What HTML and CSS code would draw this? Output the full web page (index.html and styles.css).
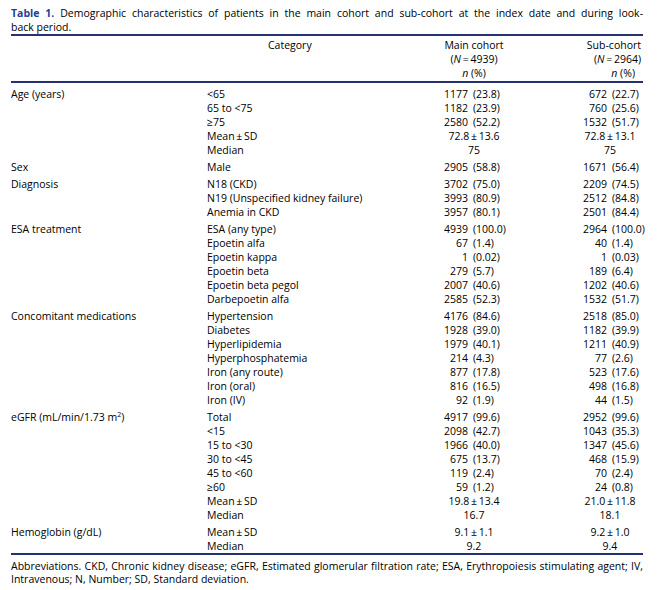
FILE: index.html
```html
<!DOCTYPE html>
<html lang="en">
<head>
<meta charset="utf-8">
<title>Table 1</title>
<link rel="stylesheet" href="styles.css">
</head>
<body>
<div class="page">
  <div class="caption">
    <span class="jline"><span class="label">Table 1.</span> Demographic characteristics of patients in the main cohort and sub-cohort at the index date and during look-</span>
    <span class="line">back period.</span>
  </div>
  <table class="tbl">
    <colgroup>
      <col class="c1"><col class="c2"><col class="c3"><col class="c4">
    </colgroup>
    <thead>
      <tr>
        <th class="h-empty"></th>
        <th class="h-cat">Category</th>
        <th class="h-main">Main cohort<br>(<i>N</i>&#8201;=&#8201;4939)<br><i>n</i> (%)</th>
        <th class="h-sub">Sub-cohort<br>(<i>N</i>&#8201;=&#8201;2964)<br><span class="np"><i>n</i> (%)</span></th>
      </tr>
    </thead>
    <tbody>
      <tr class="first"><td>Age (years)</td><td>&lt;65</td><td class="m"><span class="n">1177</span><span class="p">(23.8)</span></td><td class="s"><span class="n">672</span><span class="p">(22.7)</span></td></tr>
      <tr><td></td><td>65 to &lt;75</td><td class="m"><span class="n">1182</span><span class="p">(23.9)</span></td><td class="s"><span class="n">760</span><span class="p">(25.6)</span></td></tr>
      <tr><td></td><td>&ge;75</td><td class="m"><span class="n">2580</span><span class="p">(52.2)</span></td><td class="s"><span class="n">1532</span><span class="p">(51.7)</span></td></tr>
      <tr><td></td><td>Mean&#8201;&plusmn;&#8201;SD</td><td class="m c">72.8&#8201;&plusmn;&#8201;13.6</td><td class="s c">72.8&#8201;&plusmn;&#8201;13.1</td></tr>
      <tr><td></td><td>Median</td><td class="m c">75</td><td class="s c">75</td></tr>

      <tr class="grp"><td>Sex</td><td>Male</td><td class="m"><span class="n">2905</span><span class="p">(58.8)</span></td><td class="s"><span class="n">1671</span><span class="p">(56.4)</span></td></tr>

      <tr class="grp"><td>Diagnosis</td><td>N18 (CKD)</td><td class="m"><span class="n">3702</span><span class="p">(75.0)</span></td><td class="s"><span class="n">2209</span><span class="p">(74.5)</span></td></tr>
      <tr><td></td><td>N19 (Unspecified kidney failure)</td><td class="m"><span class="n">3993</span><span class="p">(80.9)</span></td><td class="s"><span class="n">2512</span><span class="p">(84.8)</span></td></tr>
      <tr><td></td><td>Anemia in CKD</td><td class="m"><span class="n">3957</span><span class="p">(80.1)</span></td><td class="s"><span class="n">2501</span><span class="p">(84.4)</span></td></tr>

      <tr class="grp"><td>ESA treatment</td><td>ESA (any type)</td><td class="m"><span class="n">4939</span><span class="p">(100.0)</span></td><td class="s"><span class="n">2964</span><span class="p">(100.0)</span></td></tr>
      <tr><td></td><td>Epoetin alfa</td><td class="m"><span class="n">67</span><span class="p">(1.4)</span></td><td class="s"><span class="n">40</span><span class="p">(1.4)</span></td></tr>
      <tr><td></td><td>Epoetin kappa</td><td class="m"><span class="n">1</span><span class="p">(0.02)</span></td><td class="s"><span class="n">1</span><span class="p">(0.03)</span></td></tr>
      <tr><td></td><td>Epoetin beta</td><td class="m"><span class="n">279</span><span class="p">(5.7)</span></td><td class="s"><span class="n">189</span><span class="p">(6.4)</span></td></tr>
      <tr><td></td><td>Epoetin beta pegol</td><td class="m"><span class="n">2007</span><span class="p">(40.6)</span></td><td class="s"><span class="n">1202</span><span class="p">(40.6)</span></td></tr>
      <tr><td></td><td>Darbepoetin alfa</td><td class="m"><span class="n">2585</span><span class="p">(52.3)</span></td><td class="s"><span class="n">1532</span><span class="p">(51.7)</span></td></tr>

      <tr class="grp"><td>Concomitant medications</td><td>Hypertension</td><td class="m"><span class="n">4176</span><span class="p">(84.6)</span></td><td class="s"><span class="n">2518</span><span class="p">(85.0)</span></td></tr>
      <tr><td></td><td>Diabetes</td><td class="m"><span class="n">1928</span><span class="p">(39.0)</span></td><td class="s"><span class="n">1182</span><span class="p">(39.9)</span></td></tr>
      <tr><td></td><td>Hyperlipidemia</td><td class="m"><span class="n">1979</span><span class="p">(40.1)</span></td><td class="s"><span class="n">1211</span><span class="p">(40.9)</span></td></tr>
      <tr><td></td><td>Hyperphosphatemia</td><td class="m"><span class="n">214</span><span class="p">(4.3)</span></td><td class="s"><span class="n">77</span><span class="p">(2.6)</span></td></tr>
      <tr><td></td><td>Iron (any route)</td><td class="m"><span class="n">877</span><span class="p">(17.8)</span></td><td class="s"><span class="n">523</span><span class="p">(17.6)</span></td></tr>
      <tr><td></td><td>Iron (oral)</td><td class="m"><span class="n">816</span><span class="p">(16.5)</span></td><td class="s"><span class="n">498</span><span class="p">(16.8)</span></td></tr>
      <tr><td></td><td>Iron (IV)</td><td class="m"><span class="n">92</span><span class="p">(1.9)</span></td><td class="s"><span class="n">44</span><span class="p">(1.5)</span></td></tr>

      <tr class="grp"><td>eGFR (mL/min/1.73 m<sup>2</sup>)</td><td>Total</td><td class="m"><span class="n">4917</span><span class="p">(99.6)</span></td><td class="s"><span class="n">2952</span><span class="p">(99.6)</span></td></tr>
      <tr><td></td><td>&lt;15</td><td class="m"><span class="n">2098</span><span class="p">(42.7)</span></td><td class="s"><span class="n">1043</span><span class="p">(35.3)</span></td></tr>
      <tr><td></td><td>15 to &lt;30</td><td class="m"><span class="n">1966</span><span class="p">(40.0)</span></td><td class="s"><span class="n">1347</span><span class="p">(45.6)</span></td></tr>
      <tr><td></td><td>30 to &lt;45</td><td class="m"><span class="n">675</span><span class="p">(13.7)</span></td><td class="s"><span class="n">468</span><span class="p">(15.9)</span></td></tr>
      <tr><td></td><td>45 to &lt;60</td><td class="m"><span class="n">119</span><span class="p">(2.4)</span></td><td class="s"><span class="n">70</span><span class="p">(2.4)</span></td></tr>
      <tr><td></td><td>&ge;60</td><td class="m"><span class="n">59</span><span class="p">(1.2)</span></td><td class="s"><span class="n">24</span><span class="p">(0.8)</span></td></tr>
      <tr><td></td><td>Mean&#8201;&plusmn;&#8201;SD</td><td class="m c">19.8&#8201;&plusmn;&#8201;13.4</td><td class="s c">21.0&#8201;&plusmn;&#8201;11.8</td></tr>
      <tr><td></td><td>Median</td><td class="m c">16.7</td><td class="s c">18.1</td></tr>

      <tr class="grp"><td>Hemoglobin (g/dL)</td><td>Mean&#8201;&plusmn;&#8201;SD</td><td class="m c">9.1&#8201;&plusmn;&#8201;1.1</td><td class="s c">9.2&#8201;&plusmn;&#8201;1.0</td></tr>
      <tr><td></td><td>Median</td><td class="m c">9.2</td><td class="s c">9.4</td></tr>
    </tbody>
  </table>
  <div class="foot">
    <span class="jline">Abbreviations. CKD, Chronic kidney disease; eGFR, Estimated glomerular filtration rate; ESA, Erythropoiesis stimulating agent; IV,</span>
    <span class="line">Intravenous; N, Number; SD, Standard deviation.</span>
  </div>
</div>
</body>
</html>
```

FILE: styles.css
```css
html, body {
  margin: 0;
  padding: 0;
  background: #ffffff;
}

body {
  font-family: "Open Sans", "Noto Sans", sans-serif;
  font-size: 10.5px;
  line-height: 14px;
  color: #000000;
}

.page {
  width: 632px;
  padding: 6px 17px 0 11px;
}

.jline {
  display: block;
  text-align: justify;
  text-align-last: justify;
}

.line {
  display: block;
}

.label {
  font-weight: 700;
  color: #1f3f94;
}

.tbl {
  width: 632px;
  table-layout: fixed;
  border-collapse: collapse;
  border-top: 2px solid #26316f;
  border-bottom: 2px solid #26316f;
}

.c1 { width: 196px; }
.c2 { width: 213px; }
.c3 { width: 108px; }
.c4 { width: 115px; }

.tbl th {
  font-weight: 400;
  padding: 2px 0 1px 0;
  vertical-align: top;
  border-bottom: 2px solid #26316f;
}

.tbl th.h-cat {
  text-align: left;
  padding-left: 61px;
}

.tbl th.h-main {
  text-align: center;
}

.tbl th.h-sub {
  text-align: right;
  padding-right: 2px;
}

.np {
  display: inline-block;
  padding-right: 6px;
}

.tbl td {
  padding: 0;
  white-space: nowrap;
  vertical-align: top;
  height: 14px;
}

.tbl tr.first td {
  padding-top: 4px;
}

.tbl tr.grp td {
  padding-top: 3px;
}

.tbl td.s {
  padding-left: 49px;
}

.tbl td.c {
  text-align: center;
}

.n {
  display: inline-block;
  text-align: right;
}

.m .n { width: 48px; }
.s .n { width: 30px; }

.p {
  display: inline-block;
  margin-left: 5px;
}

sup {
  font-size: 7px;
  line-height: 0;
  vertical-align: 4px;
}

.foot {
  margin-top: 5px;
  line-height: 13px;
}
```
